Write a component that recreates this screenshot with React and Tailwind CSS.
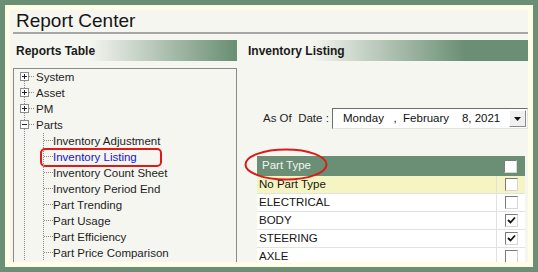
import React from 'react';

const font = { fontFamily: '"Liberation Sans", Arial, sans-serif' };

const RootConnector = ({ expanded, first }) => (
  <svg width="21" height="16" className="shrink-0" shapeRendering="crispEdges">
    <line x1="10.5" y1={first ? 12 : 0} x2="10.5" y2="16" stroke="#8a8a8a" strokeDasharray="1 1" />
    <line x1="15" y1="7.5" x2="21" y2="7.5" stroke="#8a8a8a" strokeDasharray="1 1" />
    <rect x="6.5" y="3.5" width="8" height="8" fill="#fff" stroke="#8c8c8c" />
    <line x1="8" y1="7.5" x2="13" y2="7.5" stroke="#222" />
    {!expanded && <line x1="10.5" y1="5" x2="10.5" y2="10" stroke="#222" />}
  </svg>
);

const ChildConnector = () => (
  <svg width="39" height="16" className="shrink-0" shapeRendering="crispEdges">
    <line x1="10.5" y1="0" x2="10.5" y2="16" stroke="#8a8a8a" strokeDasharray="1 1" />
    <line x1="29.5" y1="0" x2="29.5" y2="16" stroke="#8a8a8a" strokeDasharray="1 1" />
    <line x1="30" y1="7.5" x2="39" y2="7.5" stroke="#8a8a8a" strokeDasharray="1 1" />
  </svg>
);

const Checkbox = ({ checked }) => (
  <div className="w-[13px] h-[13px] bg-white border border-t-[#7b7b7b] border-l-[#7b7b7b] border-b-[#d6d6d6] border-r-[#d6d6d6] flex items-center justify-center">
    {checked && (
      <svg width="9" height="9" viewBox="0 0 9 9">
        <path d="M1 4 L3.5 6.5 L8 1.5" fill="none" stroke="#111" strokeWidth="1.8" />
      </svg>
    )}
  </div>
);

const roots = ['System', 'Asset', 'PM'];
const children = [
  'Inventory Adjustment',
  'Inventory Listing',
  'Inventory Count Sheet',
  'Inventory Period End',
  'Part Trending',
  'Part Usage',
  'Part Efficiency',
  'Part Price Comparison',
];

const partTypes = [
  { name: 'No Part Type', checked: false, highlight: true },
  { name: 'ELECTRICAL', checked: false },
  { name: 'BODY', checked: true },
  { name: 'STEERING', checked: true },
  { name: 'AXLE', checked: false },
];

export default function App() {
  return (
    <div className="w-[538px] h-[272px] bg-[#6a8f75] p-[5px]" style={font}>
      <div className="h-full border-[5px] border-[#fffde6] bg-[#f6f6f1] overflow-hidden">
        <div className="ml-[3px] h-[24px] border-b-2 border-[#a7a7a7] pl-[3px] text-[19px] leading-[22px] text-[#151515]">
          Report Center
        </div>
        <div className="flex gap-[8px] ml-[3px] mt-[6px]">
          <div className="w-[224px] shrink-0">
            <div className="h-[21px] pl-[3px] flex items-center text-[12px] font-bold text-[#1a1a1a] bg-[linear-gradient(to_right,#f6f6f1_75px,#6a8f75_222px)]">
              Reports Table
            </div>
            <div className="mt-[7px] h-[220px] border border-[#8a8a8a] text-[11.5px] text-[#1e1e1e]">
              {roots.map((r, i) => (
                <div key={r} className="h-[16px] flex items-center">
                  <RootConnector first={i === 0} />
                  <span className="ml-[1px] leading-[16px]">{r}</span>
                </div>
              ))}
              <div className="h-[16px] flex items-center">
                <RootConnector expanded />
                <span className="ml-[1px] leading-[16px]">Parts</span>
              </div>
              {children.map((c) => (
                <div key={c} className="h-[16px] flex items-center relative">
                  <ChildConnector />
                  <span className={`leading-[16px] ${c === 'Inventory Listing' ? 'text-[#1414c8]' : ''}`}>{c}</span>
                  {c === 'Inventory Listing' && (
                    <div className="absolute left-[26px] top-[-1px] w-[122px] h-[19px] border-2 border-[#e01818] rounded-[5px]" />
                  )}
                </div>
              ))}
            </div>
          </div>
          <div className="flex-1">
            <div className="h-[21px] pl-[3px] flex items-center text-[12px] font-bold text-[#1a1a1a] bg-[linear-gradient(to_right,#f6f6f1_65px,#6a8f75_220px)]">
              Inventory Listing
            </div>
            <div className="mt-[47px] flex items-center">
              <span className="ml-[18px] w-[69px] text-[11.5px] text-[#1e1e1e] whitespace-pre">As Of  Date :</span>
              <div className="flex-1 h-[21px] bg-white border border-t-[#6f6f6f] border-l-[#6f6f6f] border-b-[#e4e4e4] border-r-[#e4e4e4] flex items-center">
                <span className="ml-[10px] text-[11.5px] text-[#111] whitespace-pre">Monday   ,  February    8, 2021</span>
                <div className="ml-auto mr-[1px] w-[17px] h-[17px] bg-[#f0f0f0] border border-t-[#fdfdfd] border-l-[#fdfdfd] border-b-[#8a8a8a] border-r-[#8a8a8a] flex items-center justify-center">
                  <svg width="7" height="4" viewBox="0 0 7 4">
                    <path d="M0 0 H7 L3.5 4 Z" fill="#111" />
                  </svg>
                </div>
              </div>
            </div>
            <div className="mt-[27px] ml-[12px] mr-[3px] relative text-[11.5px]">
              <div className="h-[20px] bg-[#6a8f75] flex items-center">
                <span className="flex-1 pl-[5px] text-[#f4f4f4]">Part Type</span>
                <div className="w-[29px] flex justify-center">
                  <Checkbox />
                </div>
              </div>
              {partTypes.map((p) => (
                <div key={p.name} className={`h-[18px] flex items-stretch border-b border-[#e2e2e2] ${p.highlight ? 'bg-[#f6f4c2]' : 'bg-white'}`}>
                  <span className="flex-1 pl-[2px] flex items-center text-[#141414]">{p.name}</span>
                  <div className="w-[29px] border-l border-[#e2e2e2] flex items-center justify-center">
                    <Checkbox checked={p.checked} />
                  </div>
                </div>
              ))}
              <svg className="absolute left-[-13px] top-[-8px]" width="84" height="33" viewBox="0 0 84 33">
                <ellipse cx="42" cy="16.5" rx="40.5" ry="15" fill="none" stroke="#d81c1c" strokeWidth="2" />
              </svg>
            </div>
          </div>
        </div>
      </div>
    </div>
  );
}
